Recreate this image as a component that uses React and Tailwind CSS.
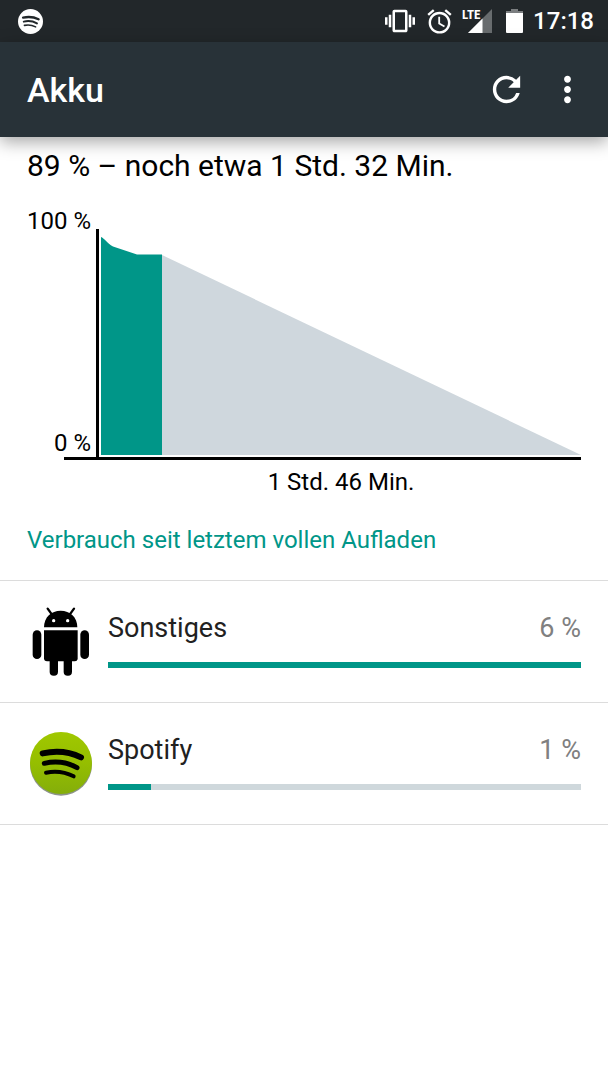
import { MdAccessAlarm, MdMoreVert, MdRefresh, MdVibration } from "react-icons/md";

const CONSUMERS = [
  { name: "Sonstiges", percent: "6 %", share: 100, Icon: AndroidIcon },
  { name: "Spotify", percent: "1 %", share: 9, Icon: SpotifyIcon },
];

function SpotifyArcs() {
  return (
    <g fill="none" stroke="currentColor" strokeLinecap="round">
      <path strokeWidth="18" d="M38 64 Q100 50 153 76" />
      <path strokeWidth="15" d="M43 94 Q96 82 141 107" />
      <path strokeWidth="12" d="M48 122 Q92 113 131 133" />
    </g>
  );
}

function SpotifyIcon() {
  return (
    <svg viewBox="-2 0 190 192" className="h-16 w-16 text-black" aria-hidden="true">
      <defs>
        <linearGradient id="spotify-green" x1="0" y1="0" x2="0" y2="1">
          <stop offset="0" stopColor="#a0c800" />
          <stop offset="0.5" stopColor="#95be00" />
          <stop offset="1" stopColor="#84ae0a" />
        </linearGradient>
      </defs>
      <circle cx="93" cy="98" r="93" fill="#8c9389" />
      <circle cx="93" cy="93" r="93" fill="url(#spotify-green)" />
      <SpotifyArcs />
    </svg>
  );
}

function SpotifyStatusIcon() {
  return (
    <svg viewBox="0 0 186 186" className="h-[25px] w-[25px] text-[#22272a]" aria-hidden="true">
      <circle cx="93" cy="93" r="93" fill="#fff" />
      <SpotifyArcs />
    </svg>
  );
}

function AndroidIcon() {
  return (
    <svg viewBox="81 50 201 210" className="h-[70px] w-[67px]" aria-hidden="true">
      <path d="M143 55 L156 73 M222 55 L209 73" stroke="#000" strokeWidth="7" strokeLinecap="round" />
      <path d="M132 111 C132 80 154 61 182 61 C210 61 232 80 232 111 Z" />
      <circle cx="161" cy="91" r="5" fill="#fff" />
      <circle cx="203" cy="91" r="5" fill="#fff" />
      <path d="M132 120 H233 V204 Q233 213 224 213 H141 Q132 213 132 204 Z" />
      <rect x="98" y="120" width="26" height="86" rx="13" />
      <rect x="241" y="120" width="26" height="86" rx="13" />
      <rect x="149" y="190" width="25" height="66" rx="12" />
      <rect x="191" y="190" width="25" height="66" rx="12" />
    </svg>
  );
}

function SignalIcon() {
  return (
    <div className="relative h-6 w-[30px]">
      <svg viewBox="0 0 30 24" className="h-6 w-[30px]" aria-hidden="true">
        <path d="M30 0 V24 H6 Z" fill="#686c6e" />
        <path d="M20.500 9.500 V24 H6 Z" fill="#fff" />
      </svg>
      <span className="absolute left-0 top-0 font-['Roboto_Condensed',Roboto,sans-serif] text-[13px] leading-[11px] font-bold">
        LTE
      </span>
    </div>
  );
}

function BatteryIcon() {
  return (
    <svg viewBox="0 0 17 24" className="h-6 w-[17px]" aria-hidden="true">
      <path d="M5 0 H12 V2 H17 V5 H0 V2 H5 Z" fill="#7b7e80" />
      <path d="M0 4 H17 V23 Q17 24 16 24 H1 Q0 24 0 23 Z" fill="#fff" />
    </svg>
  );
}

function StatusBar() {
  return (
    <div className="flex h-[42px] items-center bg-[#22272a] pr-3.5 pl-[18px] text-white">
      <SpotifyStatusIcon />
      <div className="ml-auto flex items-center">
        <MdVibration className="size-[30px]" />
        <MdAccessAlarm className="ml-2.5 size-[29px]" />
        <div className="ml-2">
          <SignalIcon />
        </div>
        <div className="ml-3.5">
          <BatteryIcon />
        </div>
        <time className="ml-2.5 text-[24px] leading-7 font-medium">17:18</time>
      </div>
    </div>
  );
}

function AppBar() {
  return (
    <header className="relative flex h-[95px] items-center gap-5 bg-[#283238] pr-5 pl-[27px] text-white shadow-[0_5px_16px_rgba(0,0,0,0.35)]">
      <h1 className="mr-auto text-[34px] leading-10 font-medium">Akku</h1>
      <button type="button" aria-label="Aktualisieren">
        <MdRefresh className="size-[41px]" />
      </button>
      <button type="button" aria-label="Weitere Optionen">
        <MdMoreVert className="size-[41px]" />
      </button>
    </header>
  );
}

function BatteryChart() {
  return (
    <figure className="mt-[23px] text-[24px] leading-7 text-black">
      <div className="flex h-[250px]">
        <div className="flex w-16 flex-col justify-between text-right whitespace-nowrap">
          <span>100 %</span>
          <span>0 %</span>
        </div>
        <div className="mt-[22px] ml-[5px] flex-1 border-l-[3px] border-black pb-0.5 pl-0.5">
          <svg viewBox="0 0 480 226" preserveAspectRatio="none" className="h-full w-full" aria-hidden="true">
            <path d="M61 26 L480 226 H61 Z" fill="#cfd7dd" />
            <path d="M0 8 C3 9 6 14 12 17.500 L36 25.500 H61 V226 H0 Z" fill="#009688" />
          </svg>
        </div>
      </div>
      <div className="ml-[37px] h-[3px] bg-black" />
      <figcaption className="mt-2 pl-[74px] text-center">1 Std. 46 Min.</figcaption>
    </figure>
  );
}

function ConsumerRow({ name, percent, share, Icon }) {
  return (
    <li className="flex h-[122px] items-center border-b border-[#dcdcdc] px-[27px]">
      <div className="flex w-[67px] justify-center">
        <Icon />
      </div>
      <div className="ml-3.5 flex-1 pb-1">
        <div className="flex justify-between text-[27px] leading-8">
          <span className="text-[#212121]">{name}</span>
          <span className="text-[#808080]">{percent}</span>
        </div>
        <div className="mt-[18px] h-1.5 bg-[#cfd8dc]">
          <div className="h-full bg-[#009688]" style={{ width: `${share}%` }} />
        </div>
      </div>
    </li>
  );
}

export default function App() {
  return (
    <div className="min-h-screen bg-white font-[Roboto,sans-serif]">
      <StatusBar />
      <AppBar />
      <main>
        <section className="px-[27px] pt-[11px]">
          <p className="text-[30px] leading-9 text-black">89 % – noch etwa 1 Std. 32 Min.</p>
          <BatteryChart />
          <h2 className="mt-[30px] text-[24px] leading-7 text-[#009688]">
            Verbrauch seit letztem vollen Aufladen
          </h2>
        </section>
        <ul className="mt-[26px] border-t border-[#dcdcdc]">
          {CONSUMERS.map((item) => (
            <ConsumerRow key={item.name} {...item} />
          ))}
        </ul>
      </main>
    </div>
  );
}
